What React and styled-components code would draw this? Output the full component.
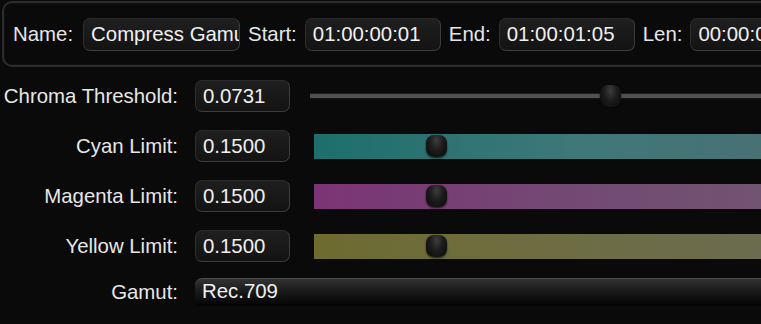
import React from "react";
import styled, { createGlobalStyle } from "styled-components";

const GlobalStyle = createGlobalStyle`
  html, body {
    margin: 0;
    padding: 0;
    background: #0a0a0a;
    overflow: hidden;
  }
  body {
    font-family: "Liberation Sans", Arial, sans-serif;
    color: #e8e8e8;
  }
`;

const limits = [
  { label: "Cyan Limit:", value: "0.1500", pos: 112, from: "#1c6f6c", mid: "#3f7879", to: "#4f6b6f" },
  { label: "Magenta Limit:", value: "0.1500", pos: 112, from: "#7b3476", mid: "#734a73", to: "#6f5a70" },
  { label: "Yellow Limit:", value: "0.1500", pos: 112, from: "#6e6b30", mid: "#6d6d45", to: "#6a6a58" },
];

export default function App() {
  return (
    <Page>
      <GlobalStyle />
      <Header>
        <HeadLabel>Name:</HeadLabel>
        <Field $width={157}>Compress Gamut</Field>
        <HeadLabel>Start:</HeadLabel>
        <Field $width={136}>01:00:00:01</Field>
        <HeadLabel>End:</HeadLabel>
        <Field $width={136}>01:00:01:05</Field>
        <HeadLabel>Len:</HeadLabel>
        <Field $width={136}>00:00:01:05</Field>
      </Header>

      <Rows>
        <Row>
          <RowLabel>Chroma Threshold:</RowLabel>
          <ValueBox>0.0731</ValueBox>
          <Track>
            <Thumb style={{ left: 290 }} />
          </Track>
        </Row>

        {limits.map((l) => (
          <Row key={l.label}>
            <RowLabel>{l.label}</RowLabel>
            <ValueBox>{l.value}</ValueBox>
            <ColorBar $from={l.from} $mid={l.mid} $to={l.to}>
              <Thumb style={{ left: l.pos }} />
            </ColorBar>
          </Row>
        ))}

        <GamutRow>
          <RowLabel>Gamut:</RowLabel>
          <Dropdown>Rec.709</Dropdown>
        </GamutRow>
      </Rows>
    </Page>
  );
}

const Page = styled.div`
  width: 900px;
  padding-top: 1px;
`;

const Header = styled.div`
  display: flex;
  align-items: center;
  gap: 8px;
  margin-left: 2px;
  height: 62px;
  padding-left: 9px;
  border: 2px solid #2c2c2c;
  border-radius: 10px;
  background: #0a0a0a;
  box-shadow: inset 0 0 0 1px #121212;
`;

const HeadLabel = styled.span`
  font-size: 20.4px;
  white-space: nowrap;
  color: #e6e6e6;
  &:first-child {
    margin-right: 2px;
  }
`;

const inputLook = `
  box-sizing: border-box;
  background: linear-gradient(#1f1f1f, #131313);
  border: 1px solid #3c3c3c;
  border-top-color: #2a2a2a;
  border-left-color: #2e2e2e;
  border-radius: 7px;
  color: #f0f0f0;
  font-size: 20.4px;
  white-space: nowrap;
  overflow: hidden;
  display: flex;
  align-items: center;
  padding-left: 7px;
`;

const Field = styled.div`
  ${inputLook}
  flex: none;
  width: ${(p) => p.$width}px;
  height: 33px;
`;

const Rows = styled.div`
  display: flex;
  flex-direction: column;
  gap: 18px;
  margin-top: 13px;
`;

const Row = styled.div`
  display: flex;
  align-items: center;
  height: 32px;
`;

const GamutRow = styled(Row)`
  height: 28px;
  margin-top: -2px;
`;

const RowLabel = styled.div`
  flex: none;
  width: 178px;
  text-align: right;
  font-size: 20.4px;
  white-space: nowrap;
  color: #e6e6e6;
  margin-right: 17px;
`;

const ValueBox = styled.div`
  ${inputLook}
  flex: none;
  width: 95px;
  height: 32px;
`;

const Track = styled.div`
  position: relative;
  flex: 1;
  margin-left: 20px;
  height: 4px;
  background: #505050;
  border-top: 1px solid #1c1c1c;
  border-bottom: 1px solid #151515;
`;

const ColorBar = styled.div`
  position: relative;
  flex: 1;
  margin-left: 24px;
  height: 25px;
  background: linear-gradient(
    to right,
    ${(p) => p.$from},
    ${(p) => p.$mid} 45%,
    ${(p) => p.$to}
  );
`;

const Thumb = styled.div`
  position: absolute;
  top: 50%;
  width: 21px;
  height: 22px;
  margin-top: -11px;
  border-radius: 8px;
  background: radial-gradient(
    ellipse at 50% 25%,
    #3c3c3c 0%,
    #1c1c1c 45%,
    #080808 100%
  );
  box-shadow: 0 1px 2px rgba(0, 0, 0, 0.7);
`;

const Dropdown = styled.div`
  flex: 1;
  box-sizing: border-box;
  height: 28px;
  display: flex;
  align-items: center;
  padding: 0 0 3px 7px;
  font-size: 20.4px;
  color: #f0f0f0;
  border-radius: 7px 0 0 0;
  border-top: 1px solid #4a4a4a;
  background: linear-gradient(#333333, #1a1a1a 45%, #030303);
`;
